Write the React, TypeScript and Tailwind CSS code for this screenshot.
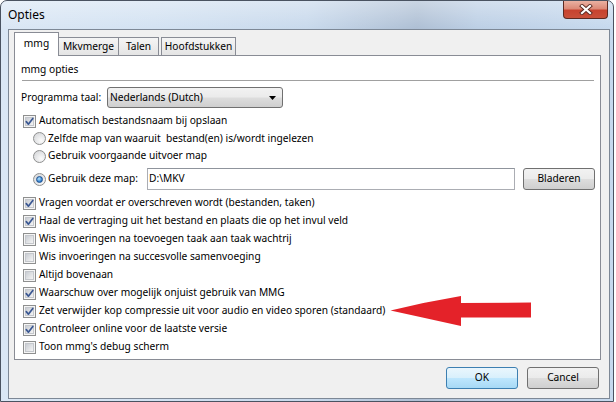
import React from "react";

function Check({ on }: { on?: boolean }) {
  return (
    <span className="relative w-[13px] h-[13px] shrink-0 border border-[#8e8f8f] bg-[#f5f5f5] p-[1px] block">
      <span className="block w-full h-full border border-[#c4c7cc] bg-[linear-gradient(135deg,#c9cdd3,#f4f4f4)]" />
      {on && (
        <svg className="absolute left-0 top-0" width="11" height="11" viewBox="0 0 11 11">
          <path d="M2.3 5.6 L4.4 8.2 L8.8 2.4" fill="none" stroke="#3a5792" strokeWidth="1.7" strokeLinecap="round" strokeLinejoin="round" />
        </svg>
      )}
    </span>
  );
}

function Radio({ on }: { on?: boolean }) {
  return (
    <span className="w-[13px] h-[13px] shrink-0 rounded-full border border-[#8e8f8f] bg-[radial-gradient(circle_at_65%_70%,#fbfbfb,#d0d2d5)] flex items-center justify-center">
      {on && (
        <span className="block w-[7px] h-[7px] rounded-full border border-[#1c4f8f] bg-[radial-gradient(circle_at_40%_35%,#b5e6ff,#2a78c8_70%)]" />
      )}
    </span>
  );
}

function CheckRow({ on, label }: { on?: boolean; label: string }) {
  return (
    <div className="h-[18px] flex items-center gap-[3px] pl-[8px]">
      <Check on={on} />
      <span className="whitespace-pre">{label}</span>
    </div>
  );
}

function RadioRow({ on, label, h }: { on?: boolean; label: string; h: string }) {
  return (
    <div className={`${h} flex items-center gap-[2px] pl-[18px]`}>
      <Radio on={on} />
      <span className="whitespace-pre">{label}</span>
    </div>
  );
}

const btnGrad =
  "bg-[linear-gradient(to_bottom,#f2f2f2_0%,#ebebeb_48%,#dddddd_52%,#cfcfcf_100%)]";

export default function App() {
  const checks: [boolean, string][] = [
    [true, "Vragen voordat er overschreven wordt (bestanden, taken)"],
    [true, "Haal de vertraging uit het bestand en plaats die op het invul veld"],
    [false, "Wis invoeringen na toevoegen taak aan taak wachtrij"],
    [false, "Wis invoeringen na succesvolle samenvoeging"],
    [false, "Altijd bovenaan"],
    [true, "Waarschuw over mogelijk onjuist gebruik van MMG"],
    [true, "Zet verwijder kop compressie uit voor audio en video sporen (standaard)"],
    [true, "Controleer online voor de laatste versie"],
    [false, "Toon mmg's debug scherm"],
  ];

  return (
    <div className="relative w-[616px] h-[402px] overflow-hidden bg-white font-['Noto_Sans',sans-serif] text-[10.2px] text-black">
      <div className="relative w-[614px] h-[402px] rounded-t-[7px] border border-[#4a5361] bg-[linear-gradient(to_right,#dae7f5_0%,#d3e2f2_25%,#c8d9ec_50%,#aebfd4_68%,#bccfe5_78%,#c6d9ee_100%)] flex flex-col">
        <div className="absolute left-0 top-0 w-full h-[28px] rounded-t-[6px] bg-[linear-gradient(to_bottom,rgba(255,255,255,0.35),rgba(255,255,255,0))]" />
        {/* title bar */}
        <div className="relative h-[28px] flex items-center pl-[7px] text-[12px] text-black">Opties</div>

        {/* client area */}
        <div className="relative ml-[7px] w-[602px] h-[370px] border border-[#7d8896] bg-[#f0f0f0] pl-[5px] pr-[8px] flex flex-col">
          {/* tabs */}
          <div className="h-[25px] flex items-end">
            <div className="relative z-10 -mb-px w-[45px] h-[24px] border border-b-0 border-[#898c95] bg-white flex items-center justify-center pb-[1px]">
              mmg
            </div>
            <div className="w-[60px] h-[18px] border-t border-r border-[#898c95] bg-[linear-gradient(to_bottom,#f5f5f5,#e4e4e4)] flex items-center justify-center">
              Mkvmerge
            </div>
            <div className="w-[40px] h-[18px] border-t border-r border-[#898c95] bg-[linear-gradient(to_bottom,#f5f5f5,#e4e4e4)] flex items-center justify-center">
              Talen
            </div>
            <div className="ml-[2px] w-[75px] h-[18px] border-t border-x border-[#898c95] bg-[linear-gradient(to_bottom,#f5f5f5,#e4e4e4)] flex items-center justify-center">
              Hoofdstukken
            </div>
          </div>

          {/* panel */}
          <div className="h-[305px] border border-[#898c95] bg-white pt-[5px] flex flex-col">
            <div className="h-[18px] flex items-center pl-[6px]">mmg opties</div>
            <div className="mt-[1px] h-px ml-[7px] mr-[6px] bg-[#a0a0a0]" />

            <div className="mt-[6px] h-[21px] flex items-center pl-[6px]">
              <span className="w-[86px] whitespace-nowrap">Programma taal:</span>
              <div className={`w-[176px] h-[21px] rounded-[3px] border border-[#707070] ${btnGrad} flex items-center pl-[2px] pr-[6px] justify-between`}>
                <span>Nederlands (Dutch)</span>
                <svg width="7" height="4" viewBox="0 0 7 4">
                  <path d="M0 0 H7 L3.5 4 Z" fill="#000" />
                </svg>
              </div>
            </div>

            <div className="mt-[4px]">
              <CheckRow on label="Automatisch bestandsnaam bij opslaan" />
            </div>
            <RadioRow h="h-[17px]" label="Zelfde map van waaruit  bestand(en) is/wordt ingelezen" />
            <RadioRow h="h-[18px]" label="Gebruik voorgaande uitvoer map" />

            <div className="mt-[3px] h-[22px] flex items-center gap-[2px] pl-[18px]">
              <Radio on />
              <span className="w-[97px] whitespace-nowrap">Gebruik deze map:</span>
              <div className="w-[368px] h-[22px] border border-[#abadb3] border-t-[#8f949c] bg-white flex items-center pl-[1px]">
                D:\MKV
              </div>
              <div className={`ml-[6px] w-[72px] h-[22px] rounded-[3px] border border-[#707070] ${btnGrad} flex items-center justify-center`}>
                Bladeren
              </div>
            </div>

            <div className="mt-[4px] flex flex-col">
              {checks.map(([on, label], i) => (
                <CheckRow key={i} on={on} label={label} />
              ))}
            </div>
          </div>

          {/* buttons */}
          <div className="mt-[7px] mr-[2px] flex justify-end gap-[9px]">
            <div className="w-[72px] h-[22px] rounded-[3px] border border-[#3c7fb1] bg-[linear-gradient(to_bottom,#eaf6fd_0%,#d9f0fc_48%,#bee6fd_52%,#a7d9f5_100%)] flex items-center justify-center">
              OK
            </div>
            <div className={`w-[72px] h-[22px] rounded-[3px] border border-[#707070] ${btnGrad} flex items-center justify-center`}>
              Cancel
            </div>
          </div>
        </div>
      </div>

      {/* close button */}
      <div className="absolute left-[563px] top-[1px] w-[45px] h-[18px] rounded-b-[4px] border border-t-0 border-[#5c2a22] bg-[linear-gradient(to_bottom,#eab1a2_0%,#dc8a78_45%,#c7432f_55%,#c9503a_100%)] flex items-center justify-center">
        <svg width="14" height="11" viewBox="0 0 14 11">
          <path d="M3 2 L11 9 M11 2 L3 9" stroke="#5a2a22" strokeWidth="4" strokeLinecap="square" />
          <path d="M3 2 L11 9 M11 2 L3 9" stroke="#ffffff" strokeWidth="2.2" strokeLinecap="square" />
        </svg>
      </div>

      {/* red arrow annotation */}
      <svg className="absolute left-0 top-0 pointer-events-none" width="616" height="402" viewBox="0 0 616 402">
        <path
          d="M390.5 310.5 Q425 302 461 296 L461 303 L531 302.5 L531 317.5 L461 317.5 L461 326 Q425 318 390.5 310.5 Z"
          fill="#e42229"
        />
      </svg>
    </div>
  );
}
